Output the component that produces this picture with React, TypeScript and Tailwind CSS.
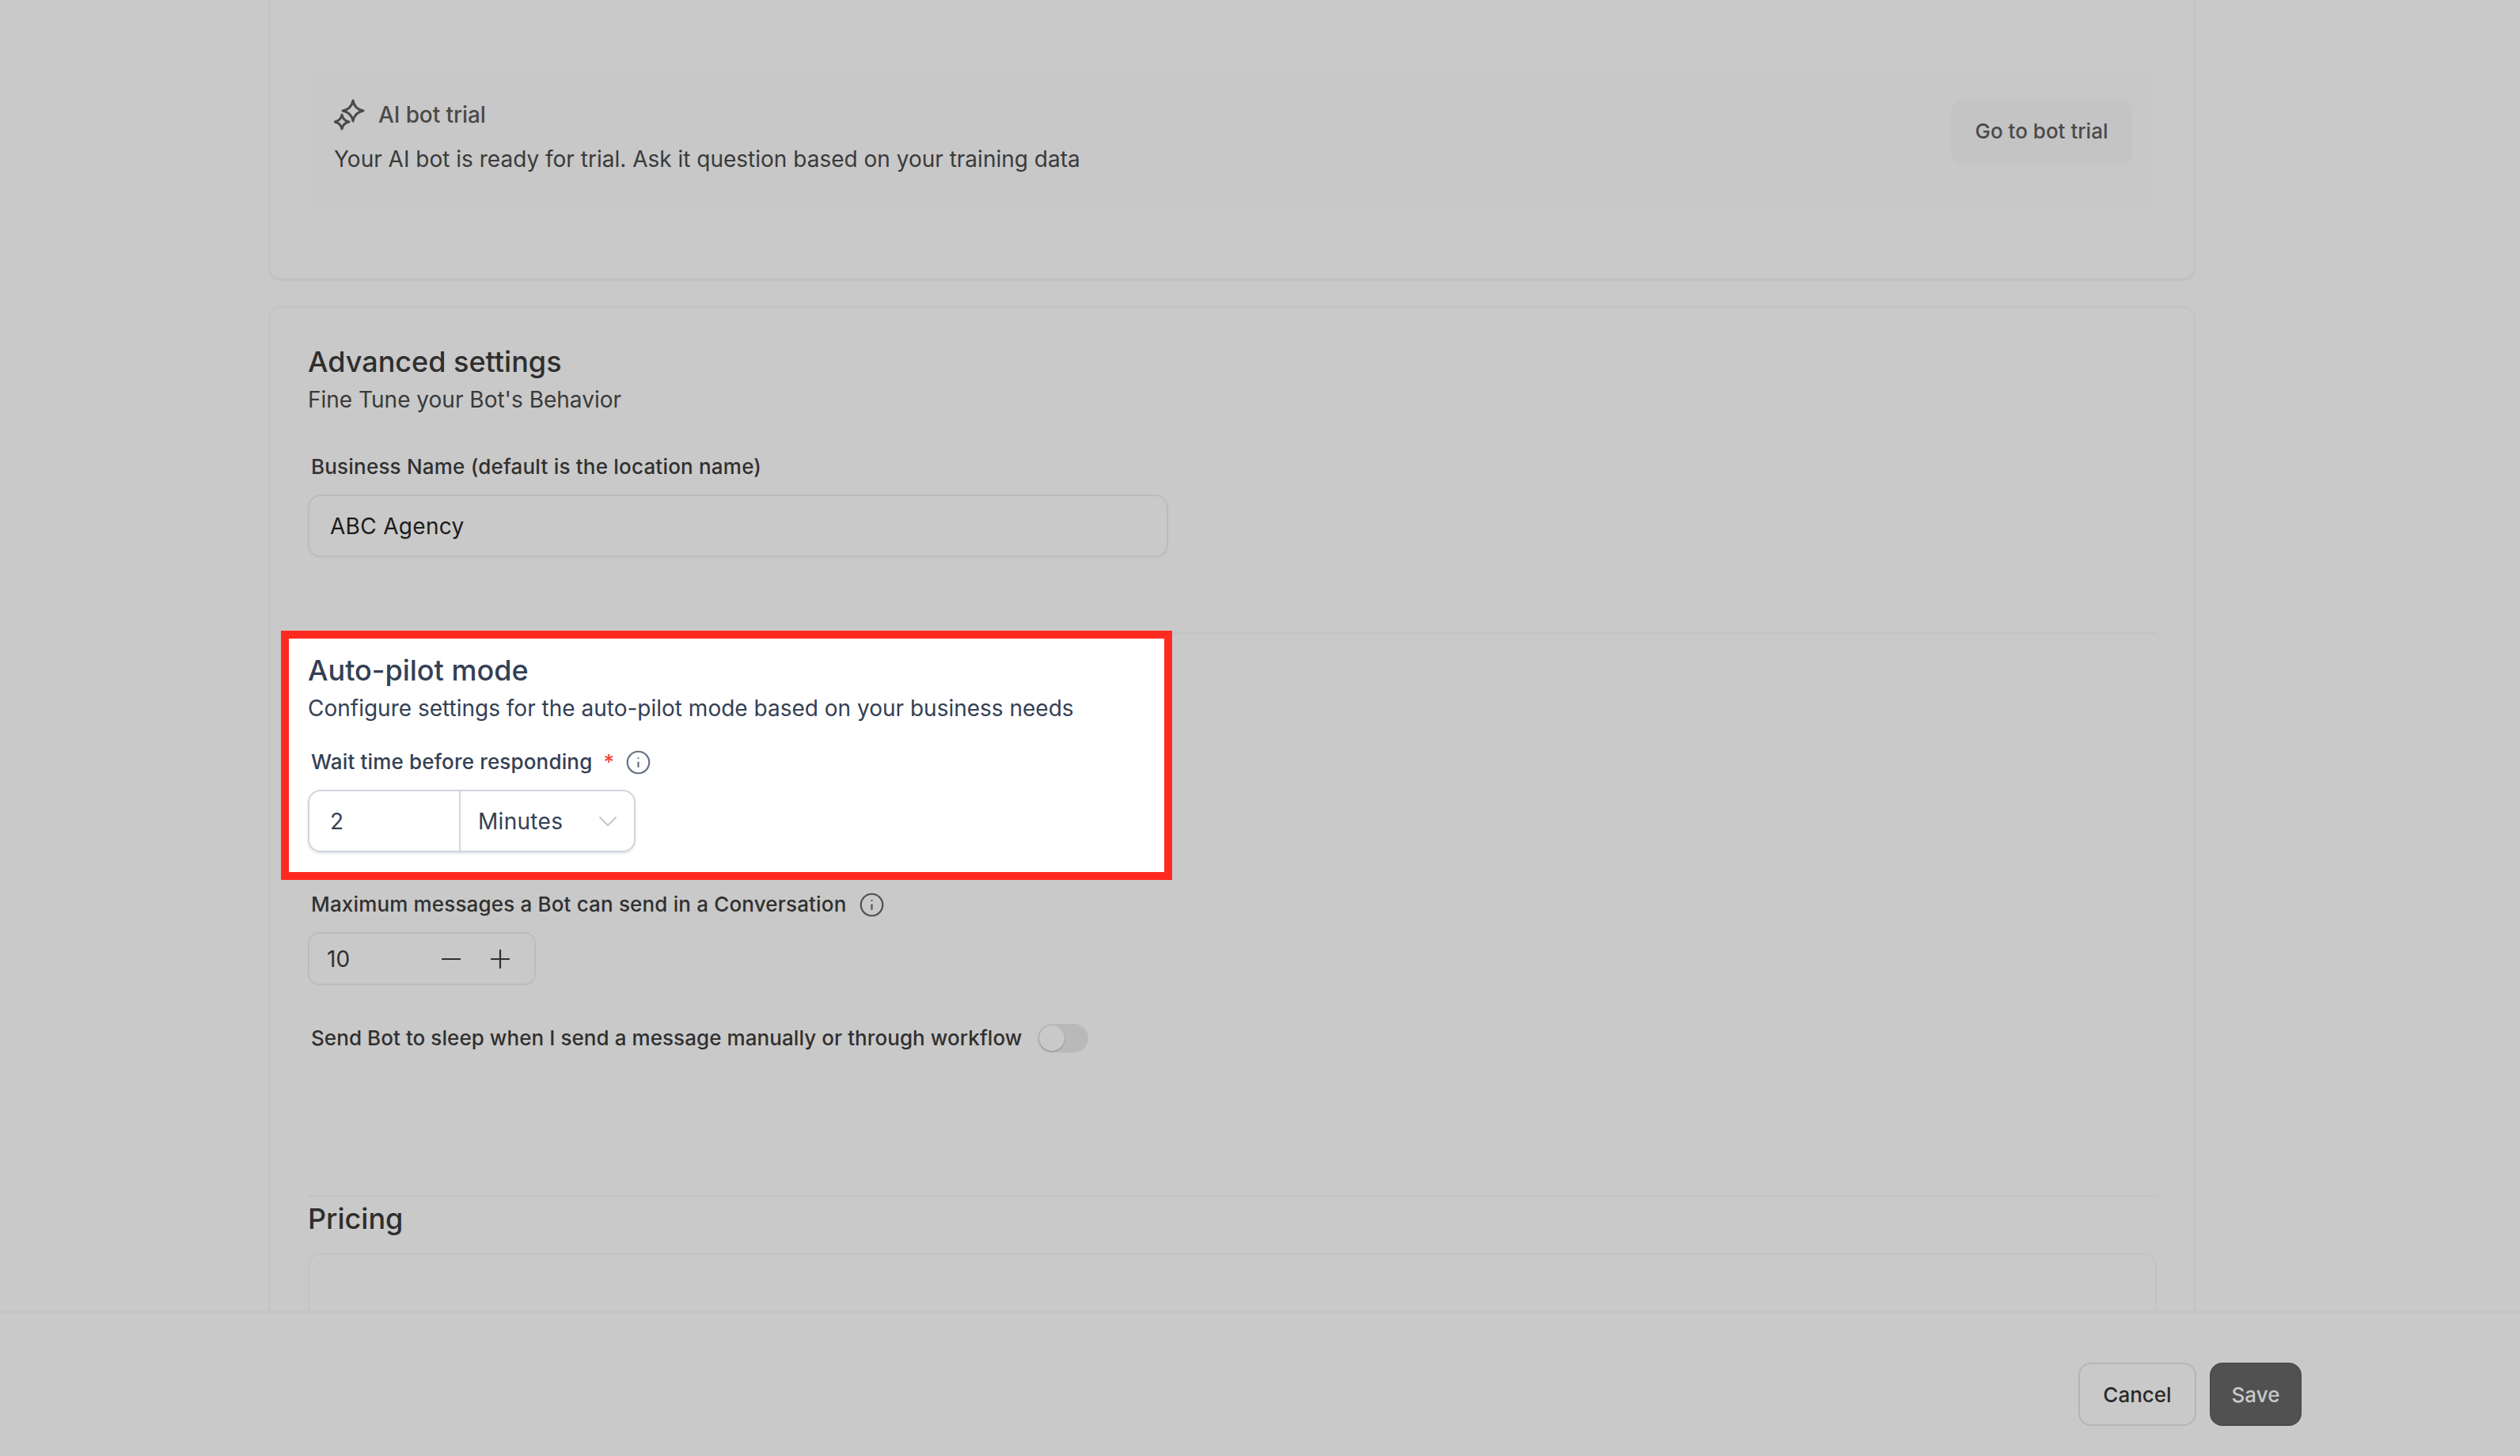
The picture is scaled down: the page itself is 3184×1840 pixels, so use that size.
import React from "react";
import { Info, Minus, Plus, ChevronDown } from "lucide-react";

function Sparkle() {
  return (
    <svg width="40" height="40" viewBox="0 0 40 40" fill="none" stroke="#4a4a4a" strokeWidth="3" strokeLinejoin="round" className="shrink-0">
      <path d="M24 2 Q26 13 37 15 Q26 17 24 28 Q22 17 11 15 Q22 13 24 2 Z" />
      <path d="M10 20 Q11.5 27.5 19 29 Q11.5 30.5 10 38 Q8.5 30.5 1 29 Q8.5 27.5 10 20 Z" />
    </svg>
  );
}

export default function App() {
  return (
    <div className="w-[3184px] h-[1840px] flex flex-col bg-[#c9c9c9] overflow-hidden font-['Inter','Liberation_Sans',sans-serif]">
      <main className="flex-1 min-h-0 overflow-hidden">
        <div className="ml-[339px] w-[2435px] flex flex-col gap-[34px]">
          <section className="-mt-[20px] h-[373px] border-2 border-[#c3c3c3] rounded-[16px] shadow-[0_2px_2px_#bfbfbf] pt-[105px] pl-[48px] pr-[47px]">
            <div className="h-[176px] rounded-[12px] bg-[#c8c8c8] border border-[#c7c7c7] pl-[32px] pr-[30px] pt-[37px] flex items-start justify-between">
              <div className="flex flex-col gap-[16px]">
                <div className="flex items-center gap-[16px]">
                  <Sparkle />
                  <span className="text-[28px] leading-[40px] font-medium tracking-[-0.1px] text-[#4a4a4a]">AI bot trial</span>
                </div>
                <p className="text-[28px] leading-[40px] text-[#3a3a3a]">Your AI bot is ready for trial. Ask it question based on your training data</p>
              </div>
              <button className="w-[229px] h-[84px] pb-[4px] rounded-[16px] bg-[#c4c4c4] text-[26px] font-medium text-[#4a4a4a]">Go to bot trial</button>
            </div>
          </section>

          <section className="border-2 border-b-0 border-[#c3c3c3] rounded-t-[16px] pt-[46px] pl-[48px] pr-[47px]">
            <h2 className="text-[36px] leading-[44px] font-medium text-[#2e2e2e]">Advanced settings</h2>
            <p className="mt-[6px] text-[28px] leading-[40px] text-[#3a3a3a]">Fine Tune your Bot's Behavior</p>
            <label className="block mt-[45px] pl-[4px] text-[26px] leading-[40px] font-medium tracking-[0.2px] text-[#303030]">Business Name (default is the location name)</label>
            <div className="mt-[15px] w-[1087px] h-[79px] border-2 border-[#bcbcbc] rounded-[16px] shadow-[0_1px_2px_#c0c0c0] pl-[26px] flex items-center text-[28px] tracking-[0.3px] text-[#1c1c1c]">ABC Agency</div>

            <div className="mt-[95px] h-[2px] bg-[#c3c3c3]" />

            <div className="relative -mt-[4px] -ml-[34px] w-[1126px] border-[10px] border-[#ff2a1f] bg-white pl-[24px] pt-[18px] pb-[25px]">
              <h2 className="text-[36px] leading-[44px] font-medium text-[#344054]">Auto-pilot mode</h2>
              <p className="mt-[6px] text-[28px] leading-[40px] text-[#344054]">Configure settings for the auto-pilot mode based on your business needs</p>
              <div className="mt-[28px] pl-[4px] flex items-center text-[26px] leading-[40px] font-medium tracking-[0.16px] text-[#344054]">
                <span>Wait time before responding</span>
                <span className="ml-[14px] text-[#f04438]">*</span>
                <Info size={33} strokeWidth={1.6} color="#667085" className="ml-[14px]" />
              </div>
              <div className="mt-[15px] w-[414px] h-[79px] border-2 border-[#d0d5dd] rounded-[16px] shadow-[0_2px_3px_#e4e7ec] flex text-[28px] tracking-[0.3px] text-[#344054]">
                <div className="w-[191px] border-r-2 border-[#d0d5dd] pl-[26px] flex items-center">2</div>
                <div className="flex-1 pl-[22px] pr-[13px] flex items-center justify-between">
                  <span>Minutes</span>
                  <ChevronDown size={40} strokeWidth={1.2} color="#c2c7d0" />
                </div>
              </div>
            </div>

            <div className="mt-[11px] pl-[4px] flex items-center text-[26px] leading-[40px] font-medium tracking-[0.16px] text-[#303030]">
              <span>Maximum messages a Bot can send in a Conversation</span>
              <Info size={33} strokeWidth={1.6} color="#505050" className="ml-[16px]" />
            </div>
            <div className="mt-[15px] w-[288px] h-[67px] border-2 border-[#bcbcbc] rounded-[14px] pl-[22px] pr-[24px] flex items-center gap-[24px] text-[28px] text-[#303030]">
              <span className="flex-1">10</span>
              <Minus size={38} strokeWidth={1.4} color="#303030" />
              <Plus size={38} strokeWidth={1.4} color="#303030" />
            </div>

            <div className="mt-[47px] pl-[4px] flex items-center text-[26px] leading-[40px] font-medium tracking-[0.07px] text-[#303030]">
              <span>Send Bot to sleep when I send a message manually or through workflow</span>
              <div className="ml-[20px] w-[64px] h-[36px] rounded-full bg-[#b9b9b9] p-[2px]">
                <div className="w-[32px] h-[32px] rounded-full bg-[#c9c9c9] shadow-[0_1px_2px_#8a8a8a]" />
              </div>
            </div>

            <div className="mt-[178px] h-[2px] bg-[#c3c3c3]" />
            <h2 className="mt-[6px] text-[36px] leading-[44px] font-medium text-[#2e2e2e]">Pricing</h2>
            <div className="mt-[22px] h-[200px] border-2 border-[#c3c3c3] rounded-[16px]" />
          </section>
        </div>
      </main>

      <footer className="h-[183px] shrink-0 border-t-2 border-[#c3c3c3] bg-[#c9c9c9] pt-[63px] pr-[276px] flex justify-end items-start gap-[17px] text-[26px] font-medium">
        <button className="w-[149px] h-[80px] rounded-[16px] border-2 border-[#b5b5b5] text-[#2a2a2a]">Cancel</button>
        <button className="w-[116px] h-[80px] rounded-[16px] bg-[#515151] border-2 border-[#4c4c4c] text-[#c9c9c9]">Save</button>
      </footer>
    </div>
  );
}
